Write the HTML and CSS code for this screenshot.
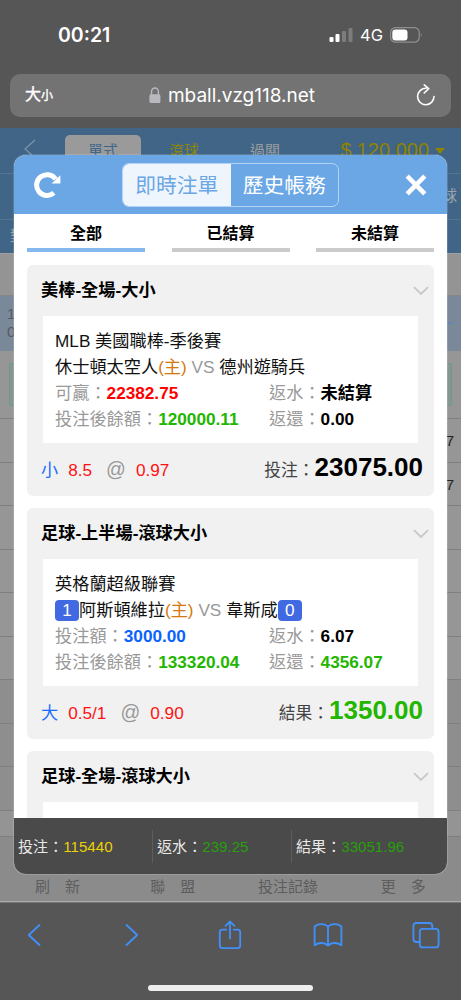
FILE: index.html
```html
<!DOCTYPE html>
<html lang="zh-Hant">
<head>
    <meta charset="UTF-8">
    <meta name="viewport" content="width=device-width, initial-scale=1.0">
    <title>即時注單</title>
    <link rel="stylesheet" href="styles.css">
</head>
<body>
    <div class="phone">
        <div class="status-bar">
            <span class="clock">00:21</span>
            <div class="status-icons">
                <svg class="signal" width="24" height="16" viewBox="0 0 24 16">
                    <rect x="0.5" y="10" width="4" height="5" rx="1" fill="#fff"/>
                    <rect x="6.5" y="7" width="4" height="8" rx="1" fill="#fff"/>
                    <rect x="13" y="4" width="4" height="11" rx="1" fill="#7c7c7c"/>
                    <rect x="19.5" y="1" width="4" height="14" rx="1" fill="#7c7c7c"/>
                </svg>
                <span class="network">4G</span>
                <svg class="battery" width="33" height="16" viewBox="0 0 33 16">
                    <rect x="0.6" y="0.6" width="28.6" height="14.6" rx="4.8" fill="none" stroke="#8f8f8f" stroke-width="1.2"/>
                    <rect x="2.3" y="2.4" width="15.2" height="11" rx="3" fill="#fff"/>
                    <path d="M30.8 5.6 Q32.6 7.9 30.8 10.2Z" fill="#8f8f8f"/>
                </svg>
            </div>
        </div>

        <div class="address-bar">
            <span class="text-size">大<small>小</small></span>
            <div class="address">
                <svg width="12" height="17" viewBox="0 0 12 17">
                    <path d="M2.5 8V4.7a3.4 3.7 0 0 1 6.9 0V8" fill="none" stroke="#b9b8bf" stroke-width="1.4"/>
                    <rect x="0.4" y="7.3" width="11" height="8.8" rx="1.6" fill="#b9b8bf"/>
                </svg>
                <span>mball.vzg118.net</span>
            </div>
            <svg class="reload" width="20" height="23" viewBox="0 0 20 23">
                <path d="M10 4.3A8.2 8.2 0 1 0 18 12.6M8.2 0.9L12.7 4.7L8.2 9" fill="none" stroke="#fff" stroke-width="1.6" stroke-linecap="round" stroke-linejoin="round"/>
            </svg>
        </div>

        <div class="site">
            <!-- dimmed page behind the popup -->
            <div class="site-nav">
                <svg width="12" height="20" viewBox="0 0 12 20"><path d="M11 1L1 10L11 19" fill="none" stroke="#8296a8" stroke-width="1.1"/></svg>
                <span class="nav-item active">單式</span>
                <span class="nav-item live">滾球</span>
                <span class="nav-item">過關</span>
                <span class="balance"><i>$</i>120,000<b class="caret"></b></span>
            </div>
            <div class="site-nav second"><span>球</span></div>
            <div class="site-nav third"><span>對</span></div>
            <div class="site-space"></div>
            <div class="site-league"><span>1<br>0</span><em></em></div>
            <div class="site-odds"><div class="odds-box"></div></div>
            <div class="site-row">7</div>
            <div class="site-row">7</div>
            <div class="site-row"></div>
            <div class="site-row"></div>
            <div class="site-row"></div>
            <div class="site-row"></div>
            <div class="site-row dark"></div>
            <div class="site-row dark"></div>
            <div class="site-row dark"></div>
            <div class="site-row short"></div>
            <div class="site-footer">
                <span>刷　新</span>
                <span>聯　盟</span>
                <span>投注記錄</span>
                <span>更　多</span>
            </div>

            <div class="popup">
                <div class="popup-head">
                    <svg class="refresh" width="28" height="28" viewBox="0 0 28 28">
                        <path d="M19.9 21.9A10.4 10.4 0 1 1 21.6 8.2" fill="none" stroke="#fff" stroke-width="5"/>
                        <path d="M26.4 4.2V12.4H17.6Z" fill="#fff"/>
                    </svg>
                    <div class="switch">
                        <span class="on">即時注單</span>
                        <span>歷史帳務</span>
                    </div>
                    <svg class="close" width="22" height="22" viewBox="0 0 22 22">
                        <path d="M2.2 2.2L19.8 19.8M19.8 2.2L2.2 19.8" stroke="#fff" stroke-width="4.6"/>
                    </svg>
                </div>
                <div class="tabs">
                    <span class="tab selected">全部</span>
                    <span class="tab">已結算</span>
                    <span class="tab">未結算</span>
                </div>

                <div class="bets">
                    <div class="bet">
                        <div class="bet-title">美棒-全場-大小
                            <svg width="16" height="10" viewBox="0 0 16 10"><path d="M1 1.2L8 8L15 1.2" fill="none" stroke="#c8c8c8" stroke-width="1.8"/></svg>
                        </div>
                        <div class="bet-info">
                            <p>MLB 美國職棒-季後賽</p>
                            <p>休士頓太空人<span class="home">(主)</span> <span class="vs">VS</span> 德州遊騎兵</p>
                            <div class="pair">
                                <p>可贏：<b class="red">22382.75</b></p>
                                <p>返水：<b>未結算</b></p>
                                <p>投注後餘額：<b class="green">120000.11</b></p>
                                <p>返還：<b>0.00</b></p>
                            </div>
                        </div>
                        <div class="bet-foot">
                            <span class="pick">小</span>
                            <span class="line">8.5</span>
                            <span class="at">@</span>
                            <span class="odds">0.97</span>
                            <span class="total">投注：<b>23075.00</b></span>
                        </div>
                    </div>

                    <div class="bet">
                        <div class="bet-title">足球-上半場-滾球大小
                            <svg width="16" height="10" viewBox="0 0 16 10"><path d="M1 1.2L8 8L15 1.2" fill="none" stroke="#c8c8c8" stroke-width="1.8"/></svg>
                        </div>
                        <div class="bet-info">
                            <p>英格蘭超級聯賽</p>
                            <p><span class="score">1</span>阿斯頓維拉<span class="home">(主)</span> <span class="vs">VS</span> 韋斯咸<span class="score">0</span></p>
                            <div class="pair">
                                <p>投注額：<b class="blue">3000.00</b></p>
                                <p>返水：<b>6.07</b></p>
                                <p>投注後餘額：<b class="green">133320.04</b></p>
                                <p>返還：<b class="green">4356.07</b></p>
                            </div>
                        </div>
                        <div class="bet-foot">
                            <span class="pick">大</span>
                            <span class="line">0.5/1</span>
                            <span class="at">@</span>
                            <span class="odds">0.90</span>
                            <span class="total">結果：<b class="green">1350.00</b></span>
                        </div>
                    </div>

                    <div class="bet">
                        <div class="bet-title">足球-全場-滾球大小
                            <svg width="16" height="10" viewBox="0 0 16 10"><path d="M1 1.2L8 8L15 1.2" fill="none" stroke="#c8c8c8" stroke-width="1.8"/></svg>
                        </div>
                        <div class="bet-info"></div>
                    </div>
                </div>

                <div class="sums">
                    <span>投注：<i class="yellow">115440</i></span>
                    <span>返水：<i>239.25</i></span>
                    <span>結果：<i>33051.96</i></span>
                </div>
            </div>
        </div>

        <div class="toolbar">
            <div class="tools">
                <svg height="24" viewBox="0 0 14 24"><path d="M12.5 2L1.8 12L12.5 22"/></svg>
                <svg height="24" viewBox="0 0 14 24"><path d="M1.5 2L12.2 12L1.5 22"/></svg>
                <svg height="30" viewBox="0 0 24 30"><path d="M8.3 9.7H4.4Q1.8 9.7 1.8 12.3V25.6Q1.8 28.2 4.4 28.2H19.6Q22.2 28.2 22.2 25.6V12.3Q22.2 9.7 19.6 9.7H15.7M12 18.5V1.6M7.6 5.8L12 1.4L16.4 5.8"/></svg>
                <svg height="24" viewBox="0 0 30 24"><path d="M15 4.2Q13.5 1.2 8.5 1.2Q4.5 1.2 1.6 3.5V22.3Q4.8 20 8.3 20Q12.5 20 15 22.7Q17.5 20 21.7 20Q25.2 20 28.4 22.3V3.5Q25.5 1.2 21.5 1.2Q16.5 1.2 15 4.2ZM15 4.2V22.5"/></svg>
                <svg height="28" viewBox="0 0 28 28"><rect x="7.8" y="7.8" width="18.8" height="18.6" rx="3"/><path d="M7.6 21H4.4Q1.4 21 1.4 18V5Q1.4 2 4.4 2H17.3Q20.3 2 20.3 5V7.6"/></svg>
            </div>
            <div class="home-line"></div>
        </div>
    </div>
</body>
</html>
```
FILE: styles.css
```css
* {
    box-sizing: border-box;
}
body {
    margin: 0;
    background: #565656;
    font-family: "Liberation Sans", "Noto Sans CJK TC", sans-serif;
}
p {
    margin: 0;
}
i, em {
    font-style: normal;
}
svg {
    display: block;
    flex-shrink: 0;
}
.phone {
    width: 461px;
    height: 1000px;
    display: flex;
    flex-direction: column;
    overflow: hidden;
}

/* browser top */
.status-bar {
    height: 74px;
    padding: 0 38px 5px 58px;
    display: flex;
    align-items: center;
    justify-content: space-between;
    color: #fff;
    font-family: Inter, sans-serif;
}
.clock {
    font-size: 19.5px;
    font-weight: 600;
}
.status-icons {
    display: flex;
    align-items: center;
    gap: 7px;
}
.network {
    font-size: 16.5px;
    font-weight: 400;
}
.address-bar {
    height: 43px;
    margin: 0 10px;
    padding: 0 15px;
    border-radius: 10px;
    background: #737373;
    color: #fff;
    display: flex;
    align-items: center;
    justify-content: space-between;
}
.text-size {
    width: 23px;
    white-space: nowrap;
    font-size: 16px;
    line-height: 24px;
    -webkit-text-stroke: 0.4px #fff;
}
.text-size small {
    font-size: 12px;
}
.address {
    display: flex;
    align-items: center;
    gap: 7px;
    font-family: Inter, sans-serif;
    font-size: 19px;
    white-space: nowrap;
}

/* page behind the popup */
.site {
    position: relative;
    height: 774px;
    margin-top: 11px;
    background: #949494;
    display: flex;
    flex-direction: column;
    overflow: hidden;
}
.site > * {
    flex-shrink: 0;
}
.site-nav {
    height: 46px;
    padding: 7px 16px 0 24px;
    background: #406587;
    border-bottom: 1px solid #56748f;
    color: #9aa4ad;
    font-size: 15px;
    display: flex;
}
.site-nav svg {
    margin: 4px 29px 0 0;
}
.nav-item {
    width: 76px;
    margin-right: 5px;
    height: 36px;
    line-height: 32px;
    text-align: center;
    color: #9a9d9f;
}
.nav-item.active {
    background: #9a9a9a;
    border-radius: 5px;
    color: #3f668a;
}
.nav-item.live {
    color: #8e8609;
}
.balance {
    display: flex;
    margin-left: auto;
    color: #8f8300;
    font-size: 20px;
    line-height: 30px;
}
.balance i {
    margin-right: 5px;
}
.caret {
    margin: 13px 0 0 6px;
    width: 10px;
    height: 6px;
    background: #8f8300;
    clip-path: polygon(0 0, 100% 0, 50% 100%);
}
.site-nav.second {
    justify-content: flex-end;
    padding: 12px 4px 0 0;
    line-height: 20px;
}
.site-nav.third {
    height: 33px;
    padding: 6px 0 0 10px;
    line-height: 20px;
    border: 0;
}
.site-space {
    height: 43px;
    border-top: 1px solid #a0a0a0;
    border-bottom: 1px solid #858585;
}
.site-league {
    height: 55px;
    padding: 9px 8px 0 7px;
    background: #798999;
    color: #555a60;
    font-size: 15px;
    line-height: 17.5px;
    display: flex;
    justify-content: space-between;
}
.site-league em {
    width: 10px;
    height: 2px;
    margin-top: 17px;
    background: #6586b5;
}
.site-odds {
    height: 68px;
    padding: 12px 9px;
    border-bottom: 1px solid #818181;
    background: #969696;
}
.odds-box {
    height: 43px;
    border: 1px solid #6e9a89;
    background: #879691;
}
.site-row {
    height: 43.5px;
    padding-right: 7px;
    border-bottom: 1px solid #7f7f7f;
    background: #969696;
    color: #222;
    font-size: 15px;
    line-height: 43px;
    text-align: right;
}
.site-row.dark {
    background: #8e8e8e;
}
.site-row.short {
    height: 26px;
    background: #949494;
}
.site-footer {
    flex: 1;
    padding-bottom: 2px;
    border-bottom: 1px solid #aaa;
    background: #8b8b8b;
    color: #5d5d5d;
    font-size: 15px;
    line-height: 24px;
    display: flex;
    align-items: flex-end;
}
.site-footer span {
    width: 25%;
    text-align: center;
}

/* popup */
.popup {
    position: absolute;
    left: 14px;
    top: 27px;
    width: 433px;
    height: 719px;
    border-radius: 12px;
    background: #fff;
    overflow: hidden;
    display: flex;
    flex-direction: column;
    box-shadow: 0 0 0 1px rgba(255, 255, 255, 0.15);
}
.popup-head {
    height: 59px;
    padding: 0 20px;
    background: #6ba7e5;
    display: flex;
    align-items: center;
    justify-content: space-between;
}
.refresh {
    margin-right: -6px;
}
.switch {
    display: flex;
    height: 44px;
    width: 217px;
    border: 1px solid #b5d3f2;
    border-radius: 7px;
    overflow: hidden;
    color: #fff;
    font-size: 20.8px;
    line-height: 44px;
}
.switch span {
    flex: 1;
    text-align: center;
}
.switch .on {
    background: #eff5fd;
    color: #6ba7e5;
}
.tabs {
    height: 38px;
    padding: 0 13px;
    display: flex;
    justify-content: space-between;
}
.tab {
    width: 118px;
    border-bottom: 4px solid #cbcbcb;
    text-align: center;
    font-size: 16px;
    font-weight: bold;
    line-height: 39px;
}
.tab.selected {
    border-color: #85b9ed;
}
.bets {
    flex: 1;
    padding: 13px 13px 0;
    overflow: hidden;
}
.bet {
    height: 230.5px;
    margin-bottom: 12.5px;
    padding: 0 11px 0 14px;
    border-radius: 6px;
    background: #f1f1f1;
    font-size: 17.2px;
}
.bet-title {
    height: 51px;
    display: flex;
    align-items: center;
    justify-content: space-between;
    font-weight: bold;
    line-height: 20px;
    padding-bottom: 2px;
}
.bet-title svg {
    margin: 2px -6px 0 0;
}
.bet-info {
    height: 127px;
    margin: 0 5px 0 2px;
    padding: 12px 12px 0;
    background: #fff;
    color: #111;
    line-height: 26px;
    white-space: nowrap;
}
.bet-info p {
    height: 26px;
}
.pair {
    display: grid;
    grid-template-columns: 214px 1fr;
    color: #999;
}
.pair b {
    color: #000;
}
.home {
    color: #d5770a;
}
.vs {
    color: #999;
}
.score {
    display: inline-block;
    width: 24px;
    height: 21px;
    border-radius: 4px;
    background: #4169e1;
    color: #fff;
    line-height: 21px;
    text-align: center;
}
b.red {
    color: #f00;
}
b.green {
    color: #22b600;
}
b.blue {
    color: #0a63ff;
}
.bet-foot {
    height: 52px;
    display: flex;
    align-items: baseline;
    line-height: 49px;
    color: #f11;
}
.pick {
    margin-right: 10px;
    color: #1a6cff;
}
.at {
    margin: 0 10px 0 14px;
    color: #999;
    font-size: 19.5px;
}
.total {
    margin-left: auto;
    color: #444;
    font-size: 16.8px;
}
.total b {
    font-size: 26px;
}
.total b:not(.green) {
    color: #000;
}
.sums {
    height: 56px;
    background: #4a4a4a;
    color: #e8e8e8;
    font-size: 15.1px;
    display: flex;
    align-items: center;
}
.sums span {
    width: 139px;
    height: 33px;
    padding-left: 4px;
    line-height: 33px;
    border-right: 1px solid #5d5d5d;
    white-space: nowrap;
}
.sums span:last-child {
    border: 0;
}
.sums i {
    color: #279f0b;
}
.sums i.yellow {
    color: #ecd008;
}

/* browser bottom */
.toolbar {
    height: 98px;
    background: #565656;
    border-top: 1px solid #777;
}
.tools {
    height: 63px;
    padding: 0 20px 0 19px;
    display: flex;
    align-items: center;
    justify-content: space-between;
}
.tools svg {
    width: 30px;
    fill: none;
    stroke: #4190fa;
    stroke-width: 1.8;
    stroke-linecap: round;
    stroke-linejoin: round;
}
.home-line {
    width: 165px;
    height: 6px;
    margin: 19px auto 0;
    border-radius: 3px;
    background: #eee;
}
```
